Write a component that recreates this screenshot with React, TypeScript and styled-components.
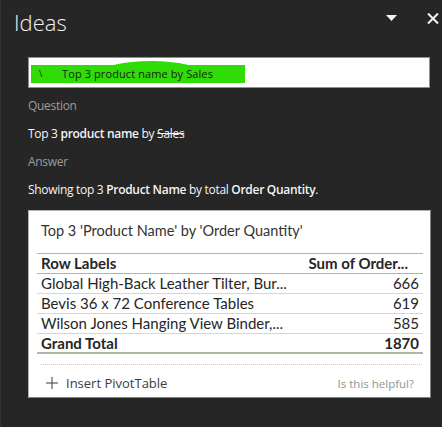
import React from 'react';
import styled, { createGlobalStyle } from 'styled-components';

const Global = createGlobalStyle`
  html, body, #root { margin: 0; padding: 0; height: 100%; }
  body { background: #262626; font-family: "Open Sans", "Noto Sans", sans-serif; overflow: hidden; }
`;

const Panel = styled.div`
  height: 427px;
  box-sizing: border-box;
  background: #262626;
  border-left: 1px solid #333;
  display: flex;
  flex-direction: column;
`;

const Header = styled.div`
  display: flex;
  align-items: center;
  height: 44px;
  padding: 0 2px 0 13px;
`;

const Title = styled.h1`
  margin: 0;
  flex: 1;
  font-family: "Open Sans", sans-serif;
  font-weight: 300;
  font-size: 22px;
  color: #f2f2f2;
  line-height: 44px;
`;

const IconButton = styled.button`
  background: none;
  border: none;
  padding: 0;
  margin-left: ${(p: { $gap?: number }) => p.$gap ?? 0}px;
  width: 14px;
  height: 14px;
  display: flex;
  align-items: center;
  justify-content: center;
  margin-top: -8px;
`;

const Body = styled.div`
  padding: 13px 12px 0 27px;
  display: flex;
  flex-direction: column;
`;

const SearchBox = styled.div`
  height: 29px;
  border: 1px solid #8e8e8e;
  background: #fff;
  display: flex;
  align-items: center;
  padding-left: 2px;
  margin-bottom: 4px;
`;

const Highlight = styled.span`
  position: relative;
  display: flex;
  align-items: center;
  width: 214px;
  height: 18px;
  margin-top: 2px;
  background: #2fdc06;
  font-size: 11px;
  color: #1a1a1a;
  &::before {
    content: "";
    position: absolute;
    left: 70px;
    width: 100px;
    top: -4px;
    height: 12px;
    border-radius: 50% 50% 0 0 / 100% 100% 0 0;
    background: #2fdc06;
  }
`;

const Cursor = styled.span`
  position: relative;
  width: 31px;
  padding-left: 8px;
  box-sizing: border-box;
  font-size: 9px;
`;

const HighlightText = styled.span`
  position: relative;
  letter-spacing: 0.1px;
`;

const Label = styled.div`
  font-size: 12px;
  letter-spacing: -0.3px;
  line-height: 28px;
  color: ${(p: { $muted?: boolean }) => (p.$muted ? '#9c9c9c' : '#f4f4f4')};
`;

const Strong = styled.b`
  font-weight: 600;
`;

const Struck = styled.span`
  text-decoration: line-through;
`;

const Card = styled.div`
  margin-top: 6px;
  width: 403px;
  box-sizing: border-box;
  height: 188px;
  background: #fff;
  border: 1px solid #b0b0b0;
  border-right-color: #808080;
  border-bottom-color: #808080;
  display: flex;
  flex-direction: column;
  padding: 0 7px 0 8px;
  font-family: "Lato", sans-serif;
`;

const CardTitle = styled.div`
  font-size: 14.5px;
  color: #333;
  padding: 11px 0 0 4px;
  height: 32px;
  box-sizing: border-box;
`;

const Table = styled.div`
  margin-top: 10px;
  border-top: 1px solid #a9b9a3;
  display: flex;
  flex-direction: column;
`;

const Row = styled.div<{ $kind?: 'head' | 'total' | 'body' }>`
  display: grid;
  grid-template-columns: 1fr auto;
  height: 20px;
  box-sizing: border-box;
  align-items: center;
  padding: 0 4px;
  font-size: 15px;
  color: #262626;
  font-weight: ${(p) => (p.$kind === 'body' ? 400 : 700)};
  border-bottom: ${(p) =>
    p.$kind === 'head' ? '1px solid #a9b9a3' : p.$kind === 'total' ? '2px solid #a9b9a3' : '1px solid #d6d6d6'};
`;

const Cell = styled.span<{ $right?: boolean }>`
  text-align: ${(p) => (p.$right ? 'right' : 'left')};
  white-space: nowrap;
  line-height: 19px;
`;

const HeadRight = styled(Cell)`
  padding-right: 11px;
`;

const Dotted = styled.div`
  margin: 10px 1px 0 4px;
  border-top: 1px dotted #c8c8c8;
`;

const Footer = styled.div`
  display: flex;
  align-items: center;
  justify-content: space-between;
  padding: 9px 9px 0 9px;
`;

const Insert = styled.span`
  display: flex;
  align-items: center;
  gap: 8px;
  font-family: "Open Sans", sans-serif;
  font-size: 13px;
  color: #3c3c3c;
`;

const Helpful = styled.span`
  font-family: "Open Sans", sans-serif;
  font-size: 11.5px;
  color: #8b978b;
`;

const rows = [
  ['Global High-Back Leather Tilter, Bur...', '666'],
  ['Bevis 36 x 72 Conference Tables', '619'],
  ['Wilson Jones Hanging View Binder,...', '585'],
];

export default function App() {
  return (
    <Panel>
      <Global />
      <Header>
        <Title>Ideas</Title>
        <IconButton aria-label="menu">
          <svg width="11" height="6" viewBox="0 0 11 6">
            <path d="M0 0 H11 L5.5 6 Z" fill="#f4f4f4" />
          </svg>
        </IconButton>
        <IconButton aria-label="close" $gap={28}>
          <svg width="12" height="11" viewBox="0 0 12 11">
            <path d="M1 0.5 L11 10.5 M11 0.5 L1 10.5" stroke="#f4f4f4" strokeWidth="2" />
          </svg>
        </IconButton>
      </Header>
      <Body>
        <SearchBox>
          <Highlight>
            <Cursor>\</Cursor>
            <HighlightText>Top 3 product name by Sales</HighlightText>
          </Highlight>
        </SearchBox>
        <Label $muted>Question</Label>
        <Label>
          Top 3 <Strong>product name</Strong> by <Struck>Sales</Struck>
        </Label>
        <Label $muted>Answer</Label>
        <Label>
          Showing top 3 <Strong>Product Name</Strong> by total <Strong>Order Quantity</Strong>.
        </Label>
        <Card>
          <CardTitle>Top 3 'Product Name' by 'Order Quantity'</CardTitle>
          <Table>
            <Row $kind="head">
              <Cell>Row Labels</Cell>
              <HeadRight $right>Sum of Order...</HeadRight>
            </Row>
            {rows.map(([name, v]) => (
              <Row key={name} $kind="body">
                <Cell>{name}</Cell>
                <Cell $right>{v}</Cell>
              </Row>
            ))}
            <Row $kind="total">
              <Cell>Grand Total</Cell>
              <Cell $right>1870</Cell>
            </Row>
          </Table>
          <Dotted />
          <Footer>
            <Insert>
              <svg width="12" height="12" viewBox="0 0 12 12">
                <path d="M6 0 V12 M0 6 H12" stroke="#3c3c3c" strokeWidth="1" />
              </svg>
              Insert PivotTable
            </Insert>
            <Helpful>Is this helpful?</Helpful>
          </Footer>
        </Card>
      </Body>
    </Panel>
  );
}
